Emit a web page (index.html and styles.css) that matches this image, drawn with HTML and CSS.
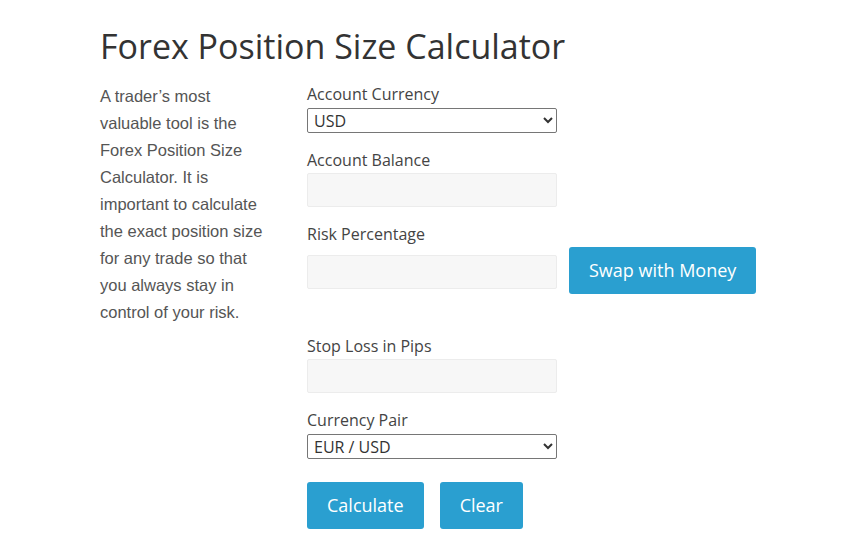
FILE: index.html
```html
<!DOCTYPE html>
<html>
<head>
<meta charset="utf-8">
<link rel="stylesheet" href="styles.css">
</head>
<body>
<main class="page">
  <h1 class="title">Forex Position Size Calculator</h1>
  <div class="layout">
    <p class="intro">A trader’s most valuable tool is the Forex Position Size Calculator. It is important to calculate the exact position size for any trade so that you always stay in control of your risk.</p>
    <form class="calc">
      <div class="field">
        <label class="label">Account Currency</label>
        <select class="select"><option>USD</option><option>EUR</option></select>
      </div>
      <div class="field">
        <label class="label">Account Balance</label>
        <input class="input" type="text">
      </div>
      <div class="field">
        <label class="label">Risk Percentage</label>
        <div class="row">
          <input class="input input-offset" type="text">
          <button type="button" class="btn btn-swap">Swap with Money</button>
        </div>
      </div>
      <div class="field field-after-row">
        <label class="label">Stop Loss in Pips</label>
        <input class="input" type="text">
      </div>
      <div class="field">
        <label class="label">Currency Pair</label>
        <select class="select"><option>EUR / USD</option><option>GBP / USD</option></select>
      </div>
      <div class="actions">
        <button type="button" class="btn">Calculate</button>
        <button type="button" class="btn">Clear</button>
      </div>
    </form>
  </div>
</main>
</body>
</html>
```
FILE: styles.css
```css
* { box-sizing: border-box; }
html, body { margin: 0; background: #fff; }
body { font-family: "Open Sans", sans-serif; color: #333; }
.page { padding: 24px 0 0 100px; }
.title {
  margin: 0;
  font-family: "Open Sans", sans-serif;
  font-weight: 400;
  font-size: 34px;
  line-height: 44px;
  color: #333;
}
.layout { display: flex; margin-top: 15px; }
.intro {
  width: 207px;
  margin: 0;
  padding-right: 36px;
  font-family: "Liberation Sans", Arial, sans-serif;
  font-size: 16.5px;
  line-height: 27px;
  color: #555;
}
.calc { display: flex; flex-direction: column; width: 460px; }
.field { display: flex; flex-direction: column; margin-bottom: 16px; }
.field-after-row { margin-top: 25px; }
.label {
  font-size: 16px;
  line-height: 22px;
  color: #444;
  margin-bottom: 2px;
}
.select {
  width: 250px;
  height: 25px;
  margin-top: 1px;
  font-family: "Open Sans", sans-serif;
  font-size: 16px;
  color: #333;
  border: 1px solid #767676;
  border-radius: 2px;
  background: #fff;
  padding: 0 2px;
}
.input {
  width: 250px;
  height: 34px;
  background: #f7f7f7;
  border: 1px solid #ececec;
  border-radius: 2px;
  font-family: "Open Sans", sans-serif;
  font-size: 15px;
  padding: 0 8px;
}
.row { display: flex; align-items: flex-start; gap: 12px; }
.input-offset { margin-top: 8px; }
.btn {
  height: 47px;
  padding: 0 20px;
  background: #2a9fd0;
  color: #fff;
  border: none;
  border-radius: 3px;
  font-family: "Open Sans", sans-serif;
  font-size: 18px;
  line-height: 47px;
}
.actions { display: flex; gap: 16px; margin-top: 7px; }
```
